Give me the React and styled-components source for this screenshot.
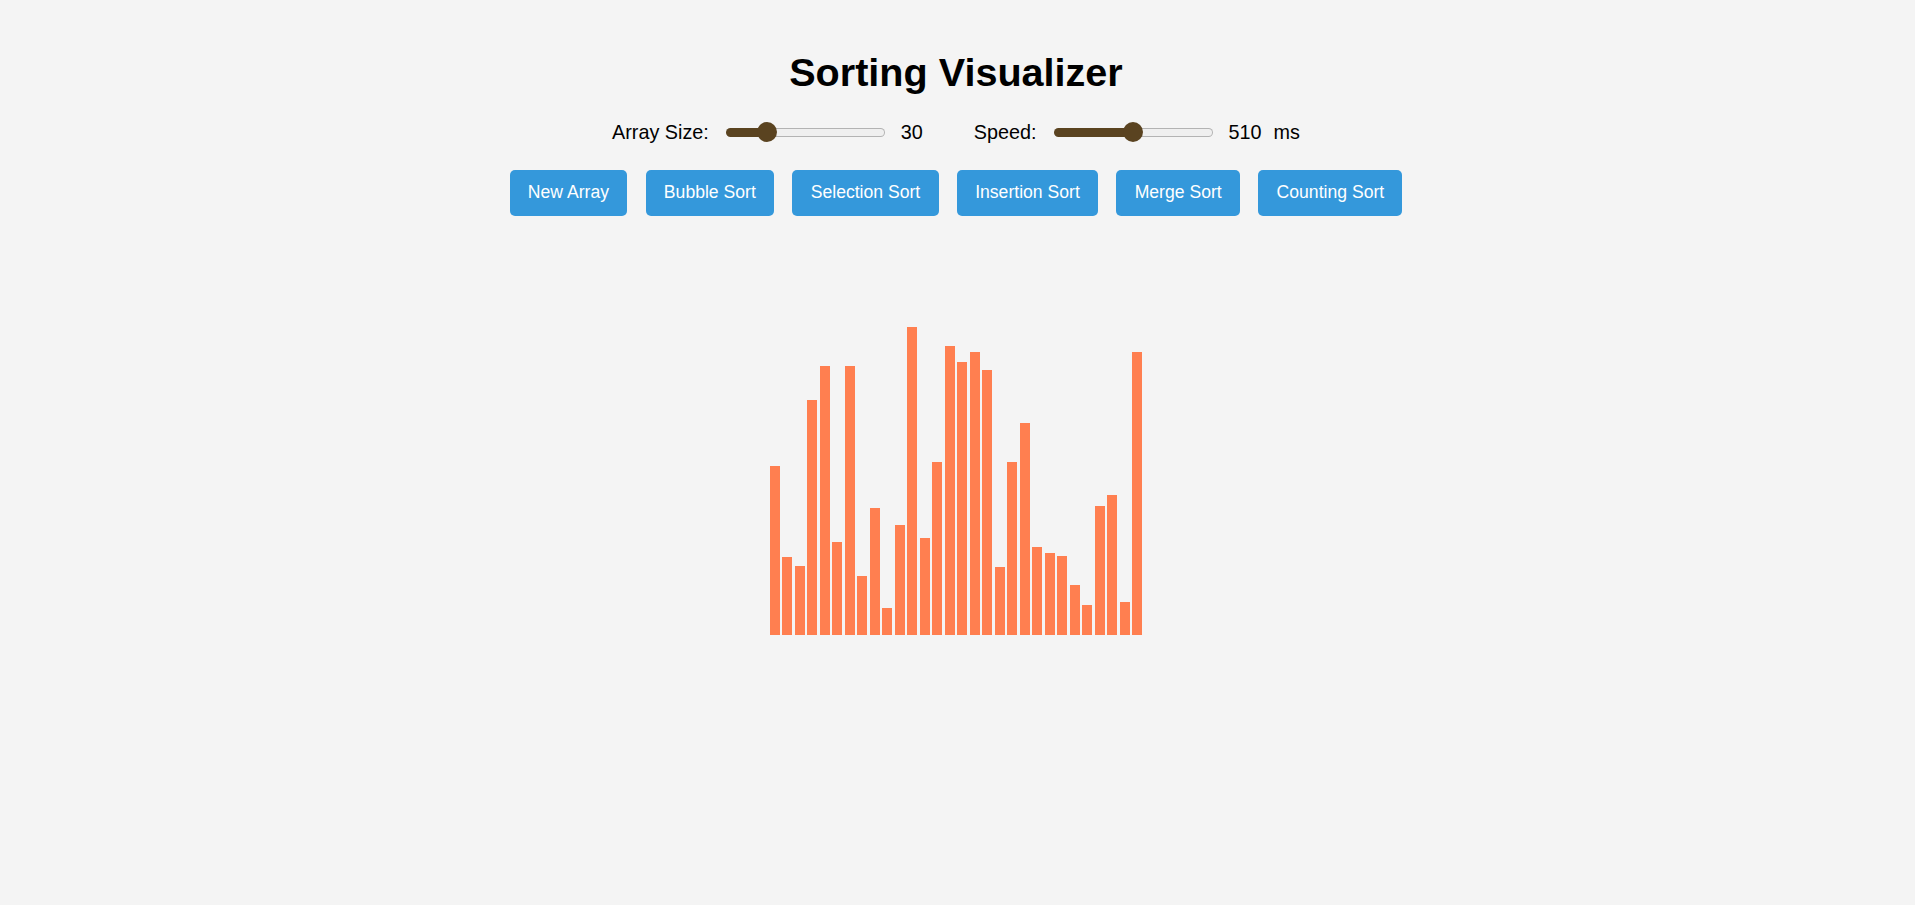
import React, { useState } from 'react'
import styled, { createGlobalStyle } from 'styled-components'

const GlobalStyle = createGlobalStyle`
  html, body {
    margin: 0;
    padding: 0;
    background: #f4f4f4;
  }
  body {
    font-family: "Liberation Sans", Arial, sans-serif;
    color: #000;
  }
`

const Page = styled.div`
  display: flex;
  flex-direction: column;
  align-items: center;
  min-height: 905px;
  padding-right: 3px;
`

const Title = styled.h1`
  margin: 49px 0 25px;
  font-size: 39.6px;
  line-height: 46px;
  font-weight: 700;
`

const Controls = styled.div`
  display: flex;
  align-items: center;
  gap: 51px;
  height: 24px;
  font-size: 19.8px;
  line-height: 24px;
`

const Group = styled.div`
  display: flex;
  align-items: center;
`

const Label = styled.label`
  margin-right: 17px;
`

const Value = styled.span`
  margin-left: 16px;
`

const Unit = styled.span`
  margin-left: 12px;
`

const THUMB = 20
const TRACK_W = 159
const BROWN = '#5a4320'

const Range = styled.input.attrs({ type: 'range' })`
  -webkit-appearance: none;
  appearance: none;
  width: ${TRACK_W}px;
  height: ${THUMB}px;
  margin: 0;
  padding: 0;
  background: transparent;

  &::-webkit-slider-runnable-track {
    box-sizing: border-box;
    height: 9px;
    border-radius: 5px;
    border: 1px solid transparent;
    background:
      linear-gradient(${BROWN}, ${BROWN}) 0 0 / ${p => p.$fill}% 100% no-repeat border-box border-box,
      linear-gradient(#efefef, #efefef) padding-box,
      #b3b3b3 border-box;
  }

  &::-webkit-slider-thumb {
    -webkit-appearance: none;
    appearance: none;
    width: ${THUMB}px;
    height: ${THUMB}px;
    margin-top: -6.5px;
    border: none;
    border-radius: 50%;
    background: ${BROWN};
  }
`

const Buttons = styled.div`
  display: flex;
  gap: 18.3px;
  margin-top: 26px;
`

const Button = styled.button`
  height: 46px;
  padding: 12px 18.3px 14px;
  border: none;
  border-radius: 5px;
  background: #3498db;
  color: #fff;
  font-family: "Liberation Sans", Arial, sans-serif;
  font-size: 17.6px;
  line-height: 20px;
  cursor: pointer;
`

const Bars = styled.div`
  display: flex;
  align-items: flex-end;
  height: 400px;
  margin-top: 19px;
`

const Bar = styled.div`
  width: 10px;
  margin: 0 1.25px;
  background: #ff7f50;
`

const heights = [
  169, 78, 69, 235, 269, 93, 269, 59, 127, 27,
  110, 308, 97, 173, 289, 273, 283, 265, 68, 173,
  212, 88, 82, 79, 50, 30, 129, 140, 33, 283,
]

const fillPct = (value, min, max) => {
  const f = (value - min) / (max - min)
  return ((THUMB / 2 + f * (TRACK_W - THUMB)) / TRACK_W) * 100
}

export default function App() {
  const [size, setSize] = useState(30)
  const [speed, setSpeed] = useState(510)

  return (
    <Page>
      <GlobalStyle />
      <Title>Sorting Visualizer</Title>
      <Controls>
        <Group>
          <Label>Array Size:</Label>
          <Range
            min={10}
            max={100}
            value={size}
            $fill={fillPct(size, 10, 100)}
            onChange={e => setSize(+e.target.value)}
          />
          <Value>{size}</Value>
        </Group>
        <Group>
          <Label>Speed:</Label>
          <Range
            min={10}
            max={1010}
            value={speed}
            $fill={fillPct(speed, 10, 1010)}
            onChange={e => setSpeed(+e.target.value)}
          />
          <Value>{speed}</Value>
          <Unit>ms</Unit>
        </Group>
      </Controls>
      <Buttons>
        <Button>New Array</Button>
        <Button>Bubble Sort</Button>
        <Button>Selection Sort</Button>
        <Button>Insertion Sort</Button>
        <Button>Merge Sort</Button>
        <Button>Counting Sort</Button>
      </Buttons>
      <Bars>
        {heights.map((h, i) => (
          <Bar key={i} style={{ height: h }} />
        ))}
      </Bars>
    </Page>
  )
}
